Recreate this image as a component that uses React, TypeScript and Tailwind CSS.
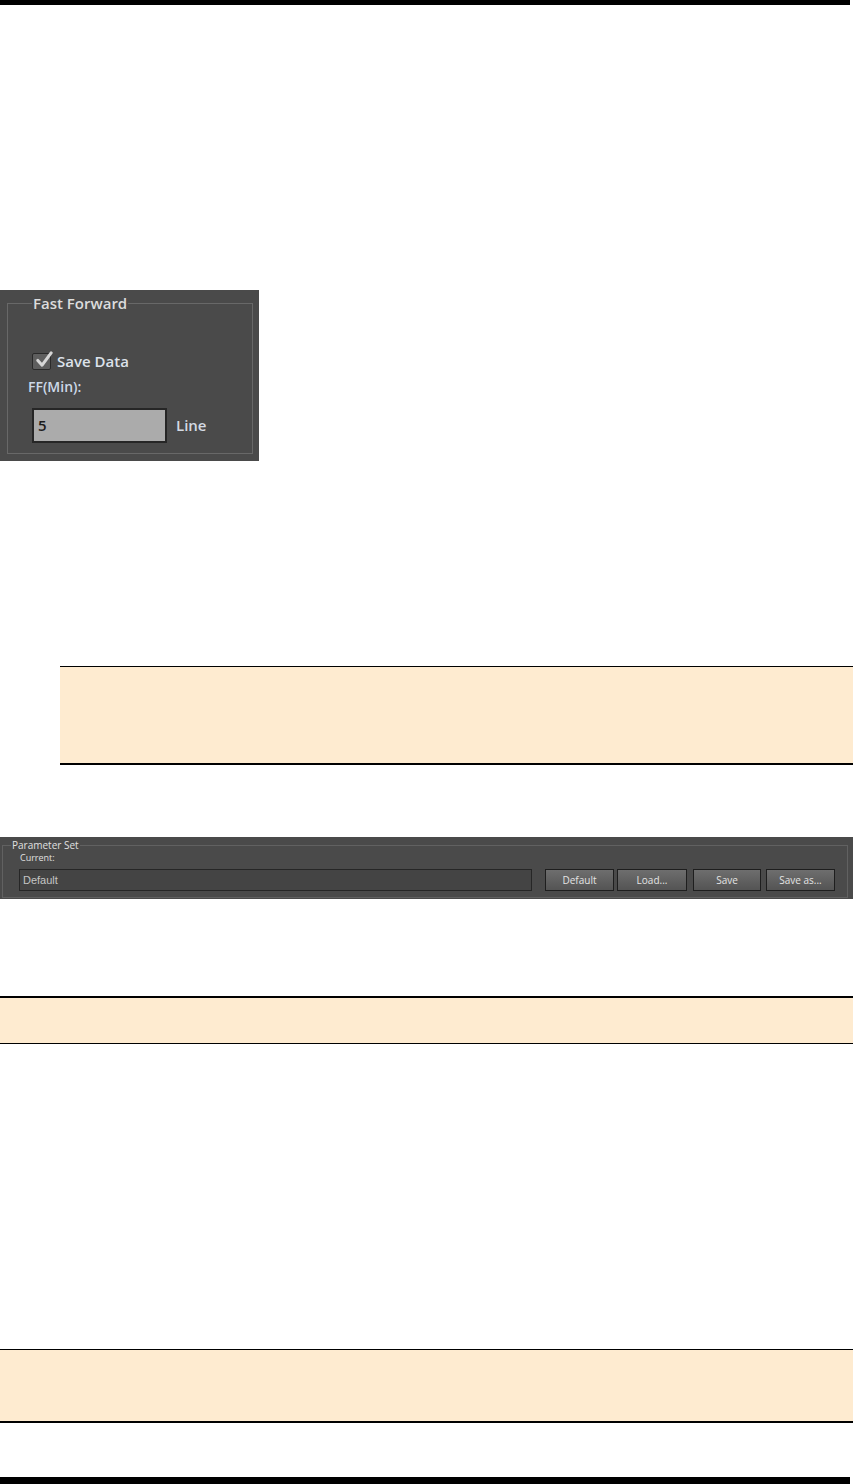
import React from 'react'

const ui = { fontFamily: '"Open Sans", "DejaVu Sans", sans-serif' }
const sans = { fontFamily: '"Liberation Sans", Arial, sans-serif' }

function CheckMark() {
  return (
    <svg viewBox="0 0 20 18" className="absolute left-[2px] top-[-3px] w-[19px] h-[18px]">
      <path d="M3 9.5 L7.5 14.5 L17 1.5" fill="none" stroke="#d6d6d6" strokeWidth="3.2" strokeLinecap="round" strokeLinejoin="round" />
    </svg>
  )
}

function FastForwardPanel() {
  return (
    <div className="w-[259px] h-[171px] bg-[#4a4a4a] pt-[2px] pl-[7px] pr-[6px] pb-[7px]" style={ui}>
      <fieldset className="h-full border border-[#686868]">
        <legend className="ml-[24px] px-[1px] text-[15px] leading-[22px] font-semibold text-[#dcdcdc]">Fast Forward</legend>
        <div className="pl-[24px] pr-[8px]">
          <div className="mt-[38px] flex items-center gap-[6px] text-[15px] text-[#dde2ea]">
            <span className="relative w-[19px] h-[17px] bg-[#5e5e5e] border border-[#2a2a2a] rounded-[2px]">
              <CheckMark />
            </span>
            <span className="leading-[18px] font-semibold">Save Data</span>
          </div>
          <div className="mt-[7px] -ml-[4px] text-[14px] leading-[20px] font-semibold text-[#cdd9e8]">FF(Min):</div>
          <div className="mt-[11px] flex items-center">
            <div className="w-[135px] h-[35px] shrink-0 bg-[#ababab] border-2 border-[#262626] flex items-center pl-[4px] text-[15px] text-[#1c1c1c] font-semibold">5</div>
            <span className="ml-[9px] text-[15px] font-semibold text-[#d4dae3]">Line</span>
          </div>
        </div>
      </fieldset>
    </div>
  )
}

function ParamButton({ label, w, ml }: { label: string; w: string; ml: string }) {
  return (
    <button
      className={`${w} ${ml} h-[22px] shrink-0 border border-[#1e1e1e] bg-gradient-to-b from-[#6e6e6e] to-[#545454] text-[10px] font-medium text-[#e4e4e4]`}
    >
      {label}
    </button>
  )
}

function ParameterSetPanel() {
  return (
    <div className="w-[853px] h-[62px] bg-[#4a4a4a] pt-[1px] pl-[2px] pr-[5px] pb-[1px]" style={ui}>
      <fieldset className="h-full border border-[#616161]">
        <legend className="ml-[8px] px-[1px] text-[10px] leading-[14px] text-[#e0e0e0]">Parameter Set</legend>
        <div className="pl-[16px] pr-[12px]">
          <div className="ml-[1px] text-[9px] leading-[12px] text-[#e0e0e0]">Current:</div>
          <div className="mt-[5px] flex items-center">
            <div className="w-[513px] h-[22px] shrink-0 bg-[#444444] border border-[#262626] flex items-center pl-[3px] text-[11px] text-[#c4c4c4]" style={sans}>
              Default
            </div>
            <ParamButton label="Default" w="w-[69px]" ml="ml-[13px]" />
            <ParamButton label="Load..." w="w-[70px]" ml="ml-[3px]" />
            <ParamButton label="Save" w="w-[68px]" ml="ml-[6px]" />
            <ParamButton label="Save as..." w="w-[69px]" ml="ml-[5px]" />
          </div>
        </div>
      </fieldset>
    </div>
  )
}

export default function App() {
  return (
    <div className="w-[853px] h-[1484px] bg-white flex flex-col overflow-hidden">
      <div className="w-[850px] h-[5px] bg-black shrink-0" />

      <div className="mt-[285px]">
        <FastForwardPanel />
      </div>

      {/* note */}
      <div className="mt-[205px] ml-[60px] h-[99px] bg-[#feebd0] border-t border-b-2 border-black" />

      <div className="mt-[72px]">
        <ParameterSetPanel />
      </div>

      {/* note */}
      <div className="mt-[97px] h-[48px] bg-[#feebd0] border-t-2 border-b border-black" />

      {/* note */}
      <div className="mt-[305px] h-[74px] bg-[#feebd0] border-t border-b-2 border-black" />

      <div className="mt-auto w-[850px] h-[7px] bg-black shrink-0" />
    </div>
  )
}
